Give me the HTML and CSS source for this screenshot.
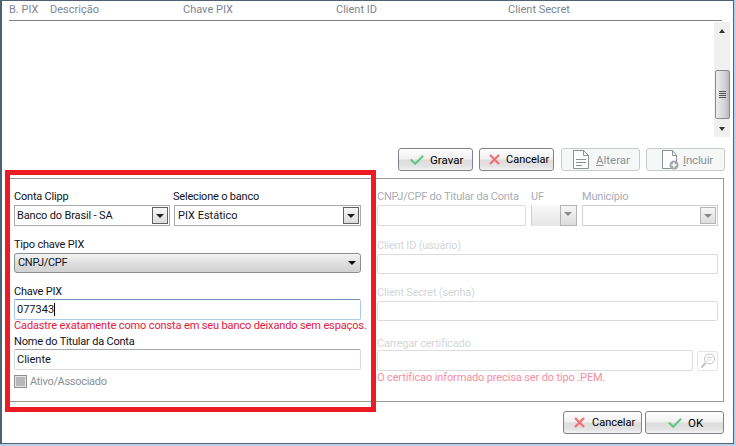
FILE: index.html
```html
<!DOCTYPE html>
<html lang="pt-BR">
<head>
<meta charset="utf-8">
<title>Conta PIX</title>
<link rel="stylesheet" href="styles.css">
</head>
<body>
<svg class="defs" width="0" height="0" aria-hidden="true">
  <symbol id="i-check" viewBox="0 0 14 10"><path d="M.8 4.5l4.4 4.3L13.2.8" fill="none" stroke="#5fc783" stroke-width="2"/></symbol>
  <symbol id="i-x" viewBox="0 0 11 11"><path d="M1 1l9 9M10 1l-9 9" fill="none" stroke="#f0737b" stroke-width="2.4"/></symbol>
  <symbol id="i-doc" viewBox="0 0 16 19"><path d="M.5.5h10l5 5v13H.5z" fill="#fff" stroke="#8d9094"/><path d="M10.5.5v5h5" fill="none" stroke="#8d9094"/><path d="M3 9.5h10M3 12.5h10M3 15.5h6" stroke="#8d9094"/></symbol>
  <symbol id="i-add" viewBox="0 0 17 20"><path d="M.5.5h10l4 5v13H.5z" fill="#fff" stroke="#8d9094"/><path d="M10.5.5v5h4" fill="none" stroke="#8d9094"/><circle cx="12" cy="15" r="4.5" fill="#a4a7aa"/><path d="M12 12.5v5M9.5 15h5" stroke="#fff" stroke-width="1.6"/></symbol>
  <symbol id="i-lens" viewBox="0 0 16 16"><circle cx="9.5" cy="6" r="5" fill="none" stroke="#c4c4c4"/><path d="M7 4.5h5M7 7h4" stroke="#d4d4d4"/><path d="M5.5 10L1.5 14.5" stroke="#c4c4c4" stroke-width="2"/></symbol>
</svg>
<main class="window">
  <section class="grid-area">
    <div class="grid-head">
      <span>B. PIX</span><span>Descrição</span><span>Chave PIX</span><span>Client ID</span><span>Client Secret</span>
    </div>
    <div class="grid-body">
      <div class="scrollbar">
        <span class="arrow arrow-up"></span>
        <span class="thumb"><i></i><i></i><i></i><i></i></span>
        <span class="arrow arrow-down"></span>
      </div>
    </div>
  </section>

  <div class="toolbar">
    <button class="btn btn-gravar"><svg class="ic-check"><use href="#i-check"/></svg>Gravar</button>
    <button class="btn btn-cancel"><svg class="ic-x"><use href="#i-x"/></svg>Cancelar</button>
    <button class="btn btn-off btn-alterar"><svg class="ic-doc"><use href="#i-doc"/></svg><span><u>A</u>lterar</span></button>
    <button class="btn btn-off btn-incluir"><svg class="ic-add"><use href="#i-add"/></svg><span><u>I</u>ncluir</span></button>
  </div>

  <section class="group">
    <div class="col col-left">
      <div class="pair">
        <div class="f f-conta"><label>Conta Clipp</label>
          <div class="ctl combo">Banco do Brasil - SA<span class="drop"></span></div></div>
        <div class="f f-banco"><label>Selecione o banco</label>
          <div class="ctl combo combo-b">PIX Estático<span class="drop"></span></div></div>
      </div>
      <div class="f mt11"><label>Tipo chave PIX</label>
        <div class="ctl select">CNPJ/CPF<span class="caret"></span></div></div>
      <div class="f mt10"><label class="low">Chave PIX</label>
        <div class="ctl input h21 focus">077343<span class="cursor"></span></div></div>
      <p class="hint">Cadastre exatamente como consta em seu banco deixando sem espaços.</p>
      <div class="f"><label class="low">Nome do Titular da Conta</label>
        <div class="ctl input h20">Cliente</div></div>
      <div class="check"><span class="box"></span>Ativo/Associado</div>
    </div>
    <div class="col col-right">
      <div class="pair">
        <div class="f f-doc"><label class="dim1">CNPJ/CPF do Titular da Conta</label><div class="ctl input h21 off"></div></div>
        <div class="f f-uf"><label class="dim1">UF</label><div class="ctl combo off uf"><span class="drop drop-off"></span></div></div>
        <div class="f f-mun"><label class="dim1">Município</label><div class="ctl combo off"><span class="drop drop-off"></span></div></div>
      </div>
      <div class="f mt12"><label class="dim2">Client ID (usuário)</label><div class="ctl input off"></div></div>
      <div class="f mt11"><label class="dim2">Client Secret (senha)</label><div class="ctl input off"></div></div>
      <div class="f mt14"><label class="dim2 lh15">Carregar certificado</label>
        <div class="cert"><div class="ctl input h21 off grow"></div>
          <span class="lens"><svg class="ic-lens"><use href="#i-lens"/></svg></span></div></div>
      <p class="hint hint-off">O certificao informado precisa ser do tipo .PEM.</p>
    </div>
  </section>

  <div class="footer">
    <button class="btn btn-cancel btn-wide"><svg class="ic-x"><use href="#i-x"/></svg>Cancelar</button>
    <button class="btn btn-wide btn-ok"><svg class="ic-check"><use href="#i-check"/></svg>OK</button>
  </div>

  <div class="highlight"></div>
</main>
</body>
</html>
```

FILE: styles.css
```css
* { box-sizing: border-box; }
html, body { margin: 0; padding: 0; }
body {
  width: 736px; height: 446px; overflow: hidden;
  background: #b9d1ea;
  font: 11px/14px Roboto, "Noto Sans", sans-serif;
  color: #10141c;
}
.defs { position: absolute; }
.window {
  position: relative;
  width: 734px; height: 444px;
  background: #fff;
  border: 1px solid #4f6173;
  border-width: 1px 1px 1px 2px;
  display: flex; flex-direction: column;
}
.grid-area { height: 136px; padding: 0 11px 0 7px; }
.grid-head {
  height: 20px; display: grid;
  grid-template-columns: 41px 133px 153px 172px 1fr;
  align-items: center;
  color: #7d8590;
  border-bottom: 1px solid #808080;
  padding-bottom: 1px;
}
.grid-body { display: flex; justify-content: flex-end; height: 116px; margin-right: -9px; padding-top: 1px; }
.scrollbar {
  width: 16px; height: 115px; background: #f0f0f0; margin-right: 1px;
  display: flex; flex-direction: column; align-items: center; position: relative;
}
.arrow { width: 0; height: 0; border-left: 3.5px solid transparent; border-right: 3.5px solid transparent; }
.arrow-up { border-bottom: 4px solid #333; margin-top: 7px; }
.arrow-down { border-top: 4px solid #333; margin-top: 8px; }
.thumb {
  width: 15px; height: 49px; margin-top: 37px;
  border: 1px solid #8a8a8a; border-radius: 2px;
  background: linear-gradient(90deg, #eeeeee, #d0d0d4 70%, #b8b8bc);
  display: flex; flex-direction: column; align-items: center; justify-content: center; gap: 1px;
}
.thumb i { display: block; width: 7px; height: 1px; background: #555; }

.toolbar { display: flex; height: 41px; padding: 11px 0 0 396px; }
.btn {
  height: 23px; width: 75px; padding: 0; margin: 0;
  display: flex; align-items: center; justify-content: flex-start;
  font: 11.5px/14px Roboto, "Noto Sans", sans-serif;
  color: #000;
  border: 1px solid #80848a; border-radius: 3px;
  background: linear-gradient(180deg, #fefefe 0, #f1f1f1 45%, #dcdcdc 55%, #e4e4e4 85%, #f4f4f4 100%);
}
.btn-gravar { margin-right: 6px; padding-left: 11px; }
.btn-cancel { margin-right: 7px; padding-left: 9px; font-size: 11px; }
.btn-off {
  border-color: #c8cacc; background: #f6f7f7; color: #8a9098; width: 79px;
}
.btn-alterar { margin-right: 6px; padding-left: 11px; }
.btn-incluir { padding-left: 15px; }
.btn-alterar span { margin-left: 7px; }
.btn-incluir span { margin-left: 4px; letter-spacing: -.2px; }
.btn-wide { width: 79px; }
.btn-wide.btn-cancel { margin-right: 3px; padding-left: 10px; }
.btn-ok { padding-left: 22px; }
.ic-check { width: 14px; height: 10px; margin-right: 6px; }
.btn-ok .ic-check { margin-right: 6px; }
.ic-x { width: 11px; height: 11px; margin-right: 6px; }
.btn-wide .ic-x { margin-right: 7px; }
.ic-doc { width: 16px; height: 19px; }
.ic-add { width: 17px; height: 20px; }
.ic-lens { width: 16px; height: 16px; }

.group {
  margin-left: 6px; width: 716px; height: 224px;
  border: 1px solid #999;
  padding: 10px 0 0 5px;
  display: flex; gap: 16px;
}
.col { display: flex; flex-direction: column; }
.col-left { width: 347px; }
.col-right { width: 341px; }
.pair { display: flex; }
.f { display: flex; flex-direction: column; }
.f label { height: 16px; line-height: 15px; white-space: nowrap; letter-spacing: -.2px; }
.f label.low { line-height: 17px; }
.mt10 { margin-top: 10px; }
.mt11 { margin-top: 11px; }
.mt12 { margin-top: 12px; }
.mt14 { margin-top: 14px; }
.f label.lh15 { height: 15px; line-height: 17px; }
.f-conta { width: 159px; margin-right: 1px; }
.f-conta .combo { width: 156px; letter-spacing: -.15px; }
.f-banco { width: 187px; }
.f-banco label { margin-left: -1px; }
.f-doc { width: 149px; margin-right: 5px; }
.f-uf { width: 46px; margin-right: 5px; }
.f-mun { width: 136px; }

.ctl {
  position: relative; height: 20px; display: flex; align-items: center;
  padding-left: 2px; white-space: nowrap;
}
.combo { border: 1px solid #a9a9a9; height: 21px; }
.combo-b { padding-left: 3px; }
.drop {
  position: absolute; right: 1px; top: 1px; bottom: 1px; width: 16px;
  border: 1px solid #5e6064; background: linear-gradient(180deg, #f6f6f6, #dcdcdc);
}
.drop::after {
  content: ""; position: absolute; left: 3px; top: 6px;
  border-left: 4px solid transparent; border-right: 4px solid transparent; border-top: 4px solid #222;
}
.drop-off { border-color: #b4b4b4; }
.drop-off::after { border-top-color: #888; }
.select {
  border: 1px solid #8b8f94; border-radius: 3px; letter-spacing: -.3px; padding-left: 3px;
  background: linear-gradient(180deg, #f4f4f4, #dedede 50%, #d2d2d2 100%);
}
.caret {
  position: absolute; right: 4px; top: 7px;
  border-left: 4px solid transparent; border-right: 4px solid transparent; border-top: 4px solid #111;
}
.input {
  border: 1px solid #d4dae0; border-top-color: #a5a8ac; border-radius: 2px; background: #fff;
}
.h21 { height: 21px; }
.h20 { height: 21px; }
.focus { border-color: #a9cde8; border-top-color: #6f93b0; }
.cursor { display: inline-block; width: 1px; height: 13px; background: #000; }
.off { border: 1px solid #dcdcdc; }
.combo.off { border-color: #cfcfcf; }
.uf { background: linear-gradient(180deg, #f8f8f8, #e6e6e6); border-width: 0 0 0 1px; }
.uf .drop { top: 0; right: 0; bottom: 0; width: 17px; }
.hint { margin: 0; height: 13px; line-height: 12px; color: #e8163c; white-space: nowrap; letter-spacing: -.13px; }
.hint-off { color: #f58ea2; line-height: 14px; }
.check { display: flex; align-items: center; height: 15px; margin-top: 4px; color: #8b9096; letter-spacing: -.3px; }
.box {
  width: 13px; height: 13px; margin-right: 3px;
  border: 1px solid #8f8f8f; background: #b8b8b8; box-shadow: inset 0 0 0 1px #e4e4e4;
}
.dim1 { color: #a8adb4; }
.dim2 { color: #d4d6d9; }
.cert { display: flex; align-items: center; gap: 4px; }
.grow { flex: 1; }
.lens {
  width: 21px; height: 20px; border: 1px solid #e6e6e6; border-radius: 2px;
  display: flex; align-items: center; justify-content: center;
}

.footer { display: flex; justify-content: flex-end; padding: 9px 9px 0 0; }

.highlight {
  position: absolute; left: 3px; top: 169px; width: 371px; height: 242px;
  border: 5px solid #ed1c24; pointer-events: none;
}
```
